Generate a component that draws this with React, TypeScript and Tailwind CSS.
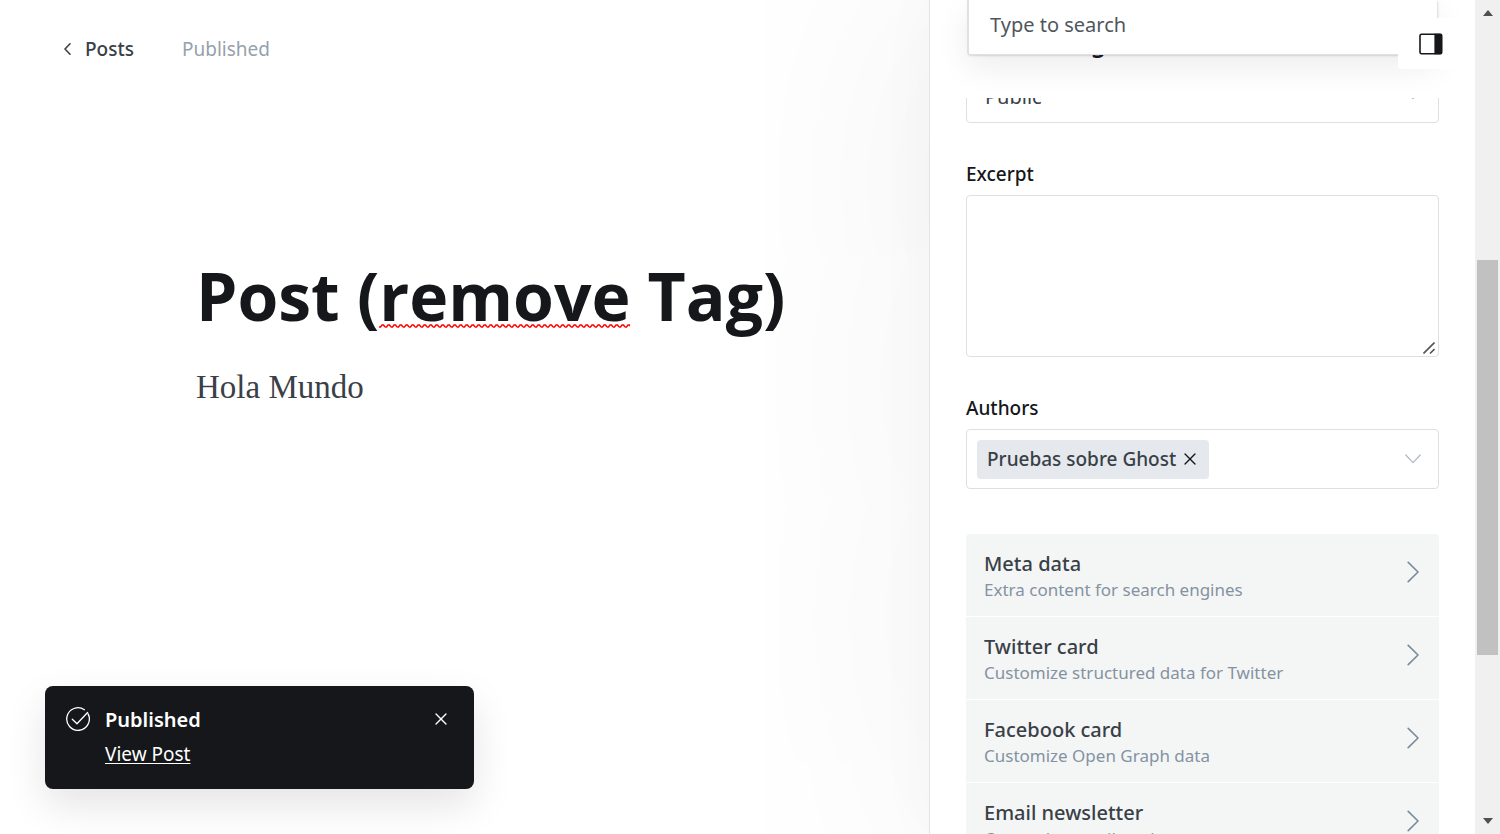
import React from "react";

const cards = [
  { title: "Meta data", note: "Extra content for search engines" },
  { title: "Twitter card", note: "Customize structured data for Twitter" },
  { title: "Facebook card", note: "Customize Open Graph data" },
  { title: "Email newsletter", note: "Customize email settings" },
];

function Cross({ className }: { className: string }) {
  return (
    <svg viewBox="0 0 14 14" className={className} fill="none" stroke="currentColor" strokeWidth="1.6" strokeLinecap="round" aria-hidden="true">
      <path d="M1.2 1.2 12.8 12.8M12.8 1.2 1.2 12.8" />
    </svg>
  );
}

function ChevronDown() {
  return (
    <svg viewBox="0 0 16 10" className="h-[10px] w-4 text-[#aeb7c1]" fill="none" stroke="currentColor" strokeWidth="1.2" strokeLinecap="round" strokeLinejoin="round" aria-hidden="true">
      <path d="M.8 1 8 8.6 15.2 1" />
    </svg>
  );
}

function Editor() {
  return (
    <main className="relative flex min-w-0 flex-1 flex-col">
      <header className="flex items-center gap-12 px-16 pt-[33px] text-[19px] leading-8">
        <a href="#posts" className="flex items-center gap-[14px] font-medium text-[#394047]">
          <svg viewBox="0 0 7 12" className="h-3 w-[7px]" fill="none" stroke="currentColor" strokeWidth="1.6" strokeLinecap="round" strokeLinejoin="round" aria-hidden="true">
            <path d="M6 .8 1 6l5 5.2" />
          </svg>
          Posts
        </a>
        <span className="text-[#95a1ad]">Published</span>
      </header>
      <article className="pt-[186px] pl-[196px]">
        <h1 className="font-['Open_Sans',sans-serif] text-[66px] leading-[88px] font-bold whitespace-nowrap text-[#15171a]">
          Post (<span className="relative">remove
            <svg className="absolute bottom-3 left-0 h-1 w-full" aria-hidden="true">
              <defs>
                <pattern id="spelling" width="6" height="4" patternUnits="userSpaceOnUse">
                  <path d="M0 3 1.5 3 3 1 4.5 1 6 3" fill="none" stroke="#f00" strokeWidth="1.4" />
                </pattern>
              </defs>
              <rect width="100%" height="4" fill="url(#spelling)" />
            </svg>
          </span> Tag)
        </h1>
        <p className="pt-7 font-['Liberation_Serif',serif] text-[33px] leading-10 text-[#394047]">Hola Mundo</p>
      </article>
      <div role="status" className="absolute bottom-[45px] left-[45px] flex h-[103px] w-[429px] rounded-lg bg-[#15171a] px-[21px] pt-[18px] text-[19px] text-white shadow-[0_16px_40px_rgba(0,0,0,0.11)]">
        <svg viewBox="0 0 24 24" className="mt-[3px] mr-[15px] h-6 w-6 shrink-0" fill="none" stroke="currentColor" strokeWidth="1.3" strokeLinecap="round" strokeLinejoin="round" aria-hidden="true">
          <path d="M18.4 2.7A11.3 11.3 0 1 0 22.1 6.9" />
          <path d="m6.3 12.2 4.7 4.6L21.6 5.5" />
        </svg>
        <div className="flex flex-1 flex-col items-start gap-[2px] leading-8">
          <strong className="text-[20px] font-semibold">Published</strong>
          <a href="#view" className="underline decoration-1 underline-offset-2">View Post</a>
        </div>
        <button aria-label="Dismiss" className="mt-[9px] mr-[6px] h-3 w-3">
          <Cross className="h-3 w-3" />
        </button>
      </div>
    </main>
  );
}

function Settings() {
  return (
    <aside className="relative z-10 flex w-[546px] shrink-0 flex-col border-l border-[#e3e5e7] bg-white shadow-[0_0_300px_20px_rgba(0,0,0,0.06),0_0_60px_rgba(0,0,0,0.03)]">
      <div className="relative z-10 h-[98px] shrink-0 bg-white px-9 pt-[27px]">
        <h2 className="text-[24px] leading-8 font-semibold text-[#15171a]">Post settings</h2>
        <div className="absolute top-0 right-[38px] left-[37px] h-[55px] rounded-b-[3px] border-b border-l-2 border-[#dfe2e5] bg-white shadow-[1px_1px_2px_rgba(20,30,45,0.15),0_12px_32px_rgba(20,30,45,0.08)]">
          <input aria-label="Type to search" placeholder="Type to search" className="h-12 w-full px-[21px] text-[20px] text-[#394047] outline-none placeholder:text-[#4f565e] placeholder:opacity-100" />
        </div>
        <button aria-label="Toggle settings" className="absolute top-[18px] right-0 flex h-[51px] w-[77px] items-center rounded-[3px] bg-white pl-[21px]">
          <svg viewBox="0 0 24 22" className="h-[22px] w-6" aria-hidden="true">
            <rect x="1" y="1.2" width="21.5" height="19.6" rx="1.6" fill="#fff" stroke="#15171a" strokeWidth="1.6" />
            <path d="M15.4.8H22a1.3 1.3 0 0 1 1.3 1.3v17.8a1.3 1.3 0 0 1-1.3 1.3h-6.6z" fill="#15171a" />
          </svg>
        </button>
      </div>
      <div className="flex-1 overflow-hidden px-9">
        <div className="relative -mt-[34px]">
          <select aria-label="Post access" className="h-[59px] w-full appearance-none rounded-[4px] border border-[#dddfe1] bg-white px-[18px] pt-[6px] text-[20px] text-[#394047]">
            <option>Public</option>
          </select>
          <div className="pointer-events-none absolute top-[26px] right-[18px]"><ChevronDown /></div>
        </div>
        <label htmlFor="excerpt" className="mt-[37px] block text-[19px] leading-7 font-medium text-[#15171a]">Excerpt</label>
        <div className="relative mt-[7px]">
          <textarea id="excerpt" className="block h-[162px] w-full resize-none rounded-[4px] border border-[#dddfe1] p-4 text-[19px] outline-none" />
          <svg viewBox="0 0 12 12" className="absolute right-1 bottom-[3px] h-3 w-3" stroke="#555" strokeWidth="1.6" aria-hidden="true">
            <path d="M.5 11.5 11.5.5M7 11.5l4.5-4.5" />
          </svg>
        </div>
        <label htmlFor="authors" className="mt-[37px] block text-[19px] leading-7 font-medium text-[#15171a]">Authors</label>
        <div className="mt-[7px] flex h-[60px] items-center rounded-[4px] border border-[#dddfe1] pr-[17px] pl-[10px]">
          <span className="flex h-[39px] shrink-0 items-center gap-2 rounded-[4px] bg-[#e5e9ed] pr-[13px] pl-[10px] text-[19px] font-medium text-[#394047]">
            Pruebas sobre Ghost
            <button aria-label="Remove author" className="text-[#15171a]"><Cross className="h-3 w-3" /></button>
          </span>
          <input id="authors" className="h-10 min-w-0 flex-1 outline-none" />
          <ChevronDown />
        </div>
        <div className="mt-[45px] overflow-hidden rounded-[4px]">
          {cards.map((card) => (
            <button key={card.title} className="flex h-[83px] w-full justify-between border-b border-white bg-[#f4f6f6] pr-5 pl-[18px] text-left">
              <span className="flex flex-col pt-[17px]">
                <span className="text-[20px] leading-[26px] font-medium text-[#394047]">{card.title}</span>
                <span className="text-[17px] leading-[25px] text-[#8492a2]">{card.note}</span>
              </span>
              <svg viewBox="0 0 12 22" className="mt-[27px] h-[22px] w-3" fill="none" stroke="#7c8b9a" strokeWidth="1.6" strokeLinecap="round" strokeLinejoin="round" aria-hidden="true">
                <path d="m1.2 1.4 9.8 9.6-9.8 9.6" />
              </svg>
            </button>
          ))}
        </div>
      </div>
    </aside>
  );
}

function ScrollTrack() {
  return (
    <div className="relative z-20 flex w-[25px] shrink-0 flex-col items-center justify-between bg-[#f0f0f0] py-[10px]">
      <svg viewBox="0 0 10 6" className="h-[6px] w-[10px]" aria-hidden="true"><path d="M0 6 5 0l5 6z" fill="#505050" /></svg>
      <div className="absolute top-[31.2%] h-[47.3%] w-[21px] bg-[#c1c1c1]" />
      <svg viewBox="0 0 10 6" className="h-[6px] w-[10px]" aria-hidden="true"><path d="M0 0 5 6l5-6z" fill="#505050" /></svg>
    </div>
  );
}

export default function App() {
  return (
    <div className="flex h-screen overflow-hidden bg-white font-['Noto_Sans',sans-serif]">
      <Editor />
      <Settings />
      <ScrollTrack />
    </div>
  );
}
